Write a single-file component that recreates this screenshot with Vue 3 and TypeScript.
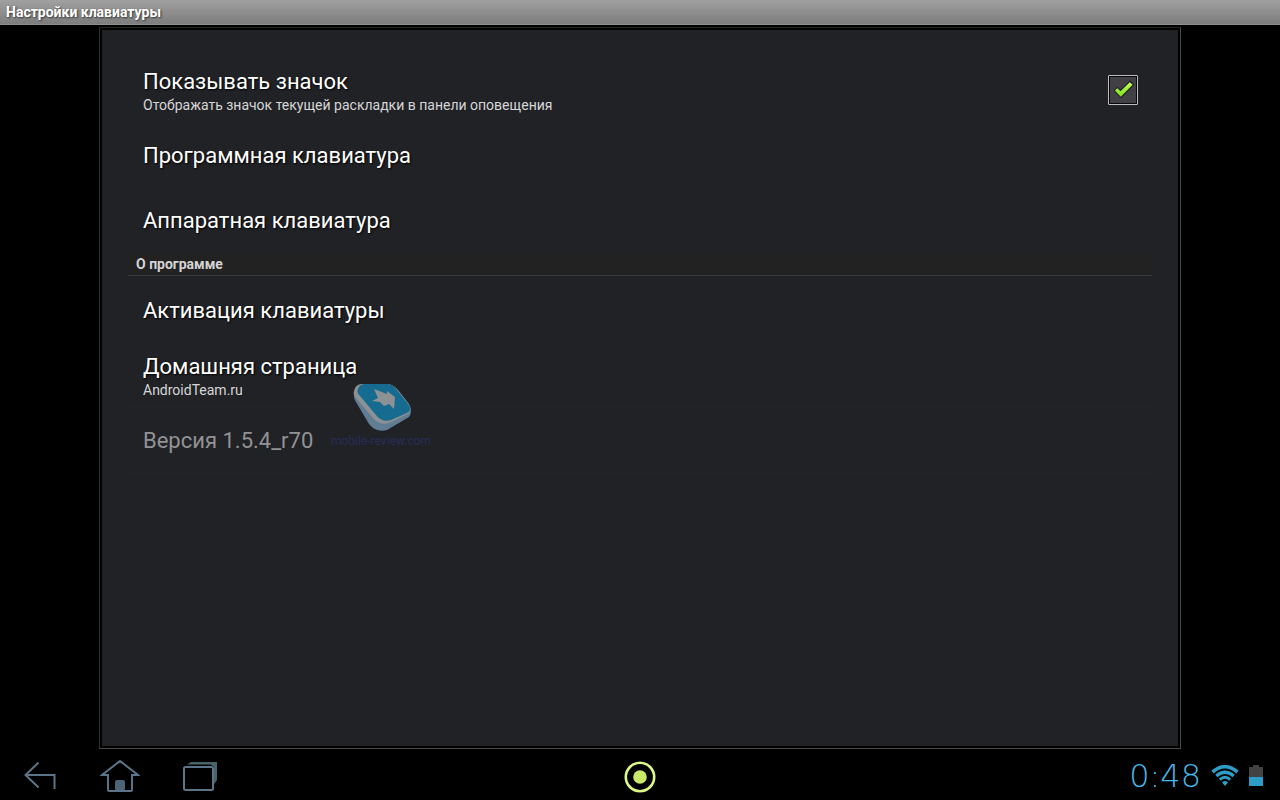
<script setup lang="ts">
import { ref } from 'vue'

interface Item {
  title: string
  summary?: string
  disabled?: boolean
}

const showIcon = ref(true)
const keyboards: Item[] = [
  { title: 'Программная клавиатура' },
  { title: 'Аппаратная клавиатура' },
]
const about: Item[] = [
  { title: 'Активация клавиатуры' },
  { title: 'Домашняя страница', summary: 'AndroidTeam.ru' },
  { title: 'Версия 1.5.4_r70', disabled: true },
]
</script>

<template>
  <div class="screen">
    <header class="titlebar">Настройки клавиатуры</header>

    <main class="stage">
      <div class="frame">
        <div class="panel">
          <label class="row">
            <span class="texts">
              <span class="title">Показывать значок</span>
              <span class="summary">Отображать значок текущей раскладки в панели оповещения</span>
            </span>
            <span class="check">
              <input v-model="showIcon" type="checkbox" />
              <svg v-if="showIcon" class="tick" viewBox="0 0 30 30" aria-hidden="true">
                <defs>
                  <linearGradient id="tickFill" x1="0" y1="0" x2="0" y2="1">
                    <stop offset="0" stop-color="#c4ff5c" />
                    <stop offset="1" stop-color="#7fe019" />
                  </linearGradient>
                </defs>
                <path d="M7 15.5 L9.5 13 L12.5 16 L22 6.5 L25 9.5 L13 22 Z" fill="#222" stroke="#252528" stroke-width="2" stroke-linejoin="round" />
                <path d="M7 15.4 L9.3 13.2 L12.5 16.2 L21.8 7.2 L24.6 9.8 L12.8 21.8 Z" fill="url(#tickFill)" />
              </svg>
            </span>
          </label>
          <button v-for="item in keyboards" :key="item.title" class="row" type="button">
            <span class="title">{{ item.title }}</span>
          </button>
          <h2 class="section">О программе</h2>
          <button
            v-for="item in about"
            :key="item.title"
            class="row"
            type="button"
            :disabled="item.disabled"
          >
            <span class="texts">
              <span class="title">{{ item.title }}</span>
              <span v-if="item.summary" class="summary">{{ item.summary }}</span>
            </span>
          </button>

          <div class="watermark">
            <svg width="60" height="48" viewBox="0 0 60 48" aria-hidden="true">
              <path d="M1 7 Q0 14 3 18 L16 40 Q23 49 34 46 L56 33 Q59 30 57 24 L30 20 Z" fill="#617d94" />
              <path d="M1 7 Q2 1 8 0 L35 0 Q41 1 45 6 L56 20 Q60 27 55 30 L38 38 Q28 43 20 34 L3 14 Q0 11 1 7 Z" fill="#8d9193" />
              <path d="M5 5 Q6 1 11 0 L35 0 Q41 1 44 6 L56 21 Q59 27 54 29 L38 36 Q29 39 23 31 L7 12 Q3 8 5 5 Z" fill="#166c90" />
              <path d="M21 5 L34 10 L34 7 L42 13 L41 25 L36 20 L31 22 L27 18 L19 17 L25 14 Z" fill="#8d9193" />
            </svg>
            <span>mobile-review.com</span>
          </div>
        </div>
      </div>
    </main>

    <footer class="navbar">
      <div class="group left">
        <button type="button" aria-label="Назад">
          <svg width="40" height="40" viewBox="0 0 40 40">
            <path d="M18.5 5.5 L5.5 18 L18.5 30.5 M6 18 H34.5 V32" />
          </svg>
        </button>
        <button type="button" aria-label="Домой">
          <svg width="40" height="40" viewBox="0 0 40 40">
            <rect x="15" y="23" width="10" height="11" rx="2" fill="#4d6478" stroke="none" />
            <path d="M8 18 H2 L20 4 L38 18 H32 V32.5 Q32 34 30.5 34 H9.5 Q8 34 8 32.5 Z" />
          </svg>
        </button>
        <button type="button" aria-label="Недавние приложения">
          <svg width="40" height="40" viewBox="0 0 40 40">
            <path d="M7 7.5 L11 5 H37 V23 L34 27 V10 L31 7.5 Z" fill="#49636a" stroke="none" />
            <rect x="4" y="10" width="29" height="23" rx="1.5" fill="#000" />
          </svg>
        </button>
      </div>
      <button class="ring" type="button" aria-label="Меню">
        <svg width="34" height="34" viewBox="0 0 34 34">
          <circle cx="17" cy="17" r="14.2" fill="none" stroke="#dcf988" stroke-width="2.6" />
          <circle cx="17" cy="17" r="6.8" fill="#c8ea68" stroke="none" />
        </svg>
      </button>
      <div class="group status">
        <time>0:48</time>
        <svg class="wifi" width="28" height="22" viewBox="0 0 28 22" aria-label="Wi-Fi">
          <g fill="none" stroke="#2d9dc8">
            <path d="M1.5 7 Q14 -3.5 26.5 7" stroke-width="3.6" />
            <path d="M5.3 11 Q14 3.5 22.7 11" stroke-width="3.2" />
            <path d="M8.8 14.6 Q14 10 19.2 14.6" stroke-width="2.8" />
          </g>
          <path d="M11 17.4 Q14 14.8 17 17.4 L14 21 Z" fill="#2d9dc8" />
        </svg>
        <svg width="14" height="22" viewBox="0 0 14 22" aria-label="Батарея">
          <path d="M0 2 H4 V0 H10 V2 H14 V13 H0 Z" fill="#424242" />
          <rect y="12" width="14" height="9" fill="#2d9dc8" />
        </svg>
      </div>
    </footer>
  </div>
</template>

<style>
body {
  margin: 0;
  background: #000;
}
</style>

<style scoped>
.screen {
  display: flex;
  flex-direction: column;
  min-height: 100vh;
  background: #000;
  color: #fff;
  font-family: Roboto, "Noto Sans", sans-serif;
}

button {
  padding: 0;
  border: 0;
  background: none;
  color: inherit;
  font: inherit;
  text-align: left;
}

.titlebar {
  box-sizing: border-box;
  height: 25px;
  padding-left: 6px;
  border-bottom: 1px solid #8c908e;
  background: linear-gradient(#a0a0a0, #7d7d7d);
  font-size: 14px;
  font-weight: 700;
  line-height: 25px;
  text-shadow: 1px 1px 2px #333;
}

.stage {
  display: flex;
  flex: 1;
  padding: 2px 99px 0;
}

.frame {
  display: flex;
  flex: 1;
  padding: 2px;
  border: 1px solid #484846;
  border-top-color: #22231f;
  border-left-color: #30302e;
}

.panel {
  position: relative;
  flex: 1;
  padding: 28px 26px;
  background: #212226;
}

.row {
  display: flex;
  box-sizing: border-box;
  width: 100%;
  min-height: 65px;
  align-items: center;
  justify-content: space-between;
  padding: 0 14px 0 15px;
  border-bottom: 1px solid #232427;
}

.texts {
  display: flex;
  flex-direction: column;
}

.title {
  padding-top: 2px;
  font-size: 22px;
  line-height: 28px;
  text-shadow: 1px 1px 2px #000;
}

.summary {
  color: #d6d6d6;
  font-size: 14px;
  line-height: 19px;
}

.row:disabled .title {
  color: #929294;
  text-shadow: none;
}

.section {
  box-sizing: border-box;
  height: 23px;
  margin: 0 0 2px;
  padding-left: 8px;
  border-bottom: 1px solid #3a3a37;
  background: #222;
  color: #d4d4d4;
  font-size: 14px;
  font-weight: 700;
  line-height: 23px;
}

.check {
  position: relative;
  width: 30px;
  height: 30px;
}

.check input {
  box-sizing: border-box;
  width: 30px;
  height: 30px;
  margin: 0;
  border: 1px solid #bdbdbd;
  border-radius: 1px;
  background: #414145;
  box-shadow: inset 0 0 0 1px #08080a;
  appearance: none;
}

.tick {
  position: absolute;
  inset: 0;
  pointer-events: none;
}

.watermark {
  position: absolute;
  top: 354px;
  left: 229px;
  display: flex;
  flex-direction: column;
  align-items: center;
  color: #262d5b;
  font-size: 12px;
  line-height: 18px;
}

.watermark svg {
  margin-left: 4px;
}

.navbar {
  display: grid;
  grid-template-columns: 1fr auto 1fr;
  height: 51px;
  align-items: center;
  padding: 0 17px;
}

.group {
  display: flex;
  align-items: center;
}

.left {
  gap: 40px;
  padding: 4px 0 0 3px;
}

.left svg {
  display: block;
  fill: none;
  stroke: #5b7488;
  stroke-width: 2;
}

.ring svg {
  display: block;
  margin-top: 4px;
}

.status {
  justify-content: flex-end;
  padding-top: 3px;
}

time {
  margin-right: 10px;
  color: #43b9e9;
  font-family: "DejaVu Sans Light", "DejaVu Sans", sans-serif;
  font-size: 32px;
  font-weight: 200;
  line-height: 32px;
}

.wifi {
  margin-right: 10px;
}
</style>
